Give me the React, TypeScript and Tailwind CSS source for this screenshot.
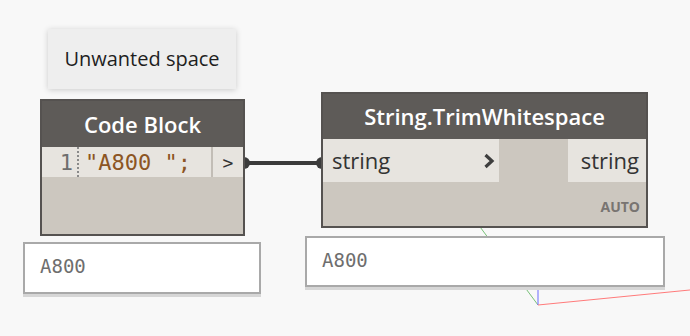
const ui = { fontFamily: '"Open Sans", "Noto Sans", sans-serif' }
const mono = { fontFamily: '"DejaVu Sans Mono", "Liberation Mono", monospace' }

function Axes() {
  return (
    <svg className="absolute inset-0" width="690" height="336">
      <line x1="538" y1="305" x2="466" y2="208" stroke="#78c078" strokeWidth="1" />
      <line x1="538" y1="305" x2="538" y2="270" stroke="#6a6aff" strokeWidth="1" />
      <line x1="538" y1="305" x2="700" y2="289" stroke="#ff7a7a" strokeWidth="1" />
    </svg>
  )
}

function Wire() {
  return (
    <svg className="absolute inset-0" width="690" height="336">
      <line x1="246" y1="163" x2="320" y2="163" stroke="#3b3b3b" strokeWidth="4" />
      <path d="M244 157 A6 6 0 0 1 244 169 Z" fill="#3b3b3b" />
      <path d="M322 157 A6 6 0 0 0 322 169 Z" fill="#3b3b3b" />
    </svg>
  )
}

function CodeBlockNode() {
  return (
    <div className="absolute left-[40px] top-[99px] w-[205px] h-[137px] flex flex-col bg-[#ccc7bf] border-2 border-[#555250]">
      <div className="h-[46px] shrink-0 bg-[#5e5b58] flex items-center justify-center text-white text-[22px] font-semibold" style={ui}>
        Code Block
      </div>
      <div className="h-[30px] shrink-0 flex bg-[#e7e4df]">
        <div className="w-[37px] flex items-center justify-end pr-[4px] text-[22px] text-[#6e6e6e] border-r-2 border-dotted border-[#8a8a8a]" style={mono}>
          1
        </div>
        <div className="flex-1 flex items-center pl-[6px] text-[22px] text-[#8c5523]" style={mono}>
          "A800 ";
        </div>
        <div className="w-[32px] flex items-center justify-center text-[18px] text-[#333] border-l-2 border-[#c2bdb6]" style={mono}>
          &gt;
        </div>
      </div>
    </div>
  )
}

function TrimNode() {
  return (
    <div className="absolute left-[321px] top-[92px] w-[327px] h-[136px] flex flex-col bg-[#ccc7bf] border-2 border-[#555250]">
      <div className="h-[45px] shrink-0 bg-[#5e5b58] flex items-center justify-center text-white text-[22px] font-semibold" style={ui}>
        String.TrimWhitespace
      </div>
      <div className="h-[43px] shrink-0 flex">
        <div className="w-[176px] bg-[#e7e4df] flex items-center justify-between pl-[9px] pr-[4px] text-[22px] text-[#333]" style={ui}>
          <span>string</span>
          <svg width="12" height="16" viewBox="0 0 12 16">
            <path d="M2.5 2 L9 8 L2.5 14" fill="none" stroke="#3e3e3e" strokeWidth="3.2" />
          </svg>
        </div>
        <div className="flex-1" />
        <div className="w-[78px] bg-[#e7e4df] flex items-center justify-end pr-[7px] text-[22px] text-[#333]" style={ui}>
          string
        </div>
      </div>
      <div className="flex-1 flex items-end justify-end pr-[6px] pb-[9px] text-[14px] font-bold text-[#787471]" style={ui}>
        AUTO
      </div>
    </div>
  )
}

function Preview({ className, children }: { className: string; children: string }) {
  return (
    <div className={`absolute bg-white border-2 border-[#a9a9a9] shadow-[0_3px_0_#d6d6d6] flex items-center pl-[15px] pb-[3px] text-[19px] text-[#6e6e6e] ${className}`} style={mono}>
      {children}
    </div>
  )
}

export default function App() {
  return (
    <div className="relative w-[690px] h-[336px] overflow-hidden bg-[#f8f8f8]">
      <Axes />
      <div className="absolute left-[48px] top-[29px] w-[188px] h-[60px] bg-[#eeeeee] shadow-[0_1px_6px_rgba(0,0,0,0.18)] flex items-center justify-center text-[20px] text-[#1e1e1e]" style={ui}>
        Unwanted space
      </div>
      <Wire />
      <CodeBlockNode />
      <TrimNode />
      <Preview className="left-[23px] top-[242px] w-[238px] h-[52px]">A800</Preview>
      <Preview className="left-[305px] top-[236px] w-[360px] h-[51px]">A800</Preview>
    </div>
  )
}
